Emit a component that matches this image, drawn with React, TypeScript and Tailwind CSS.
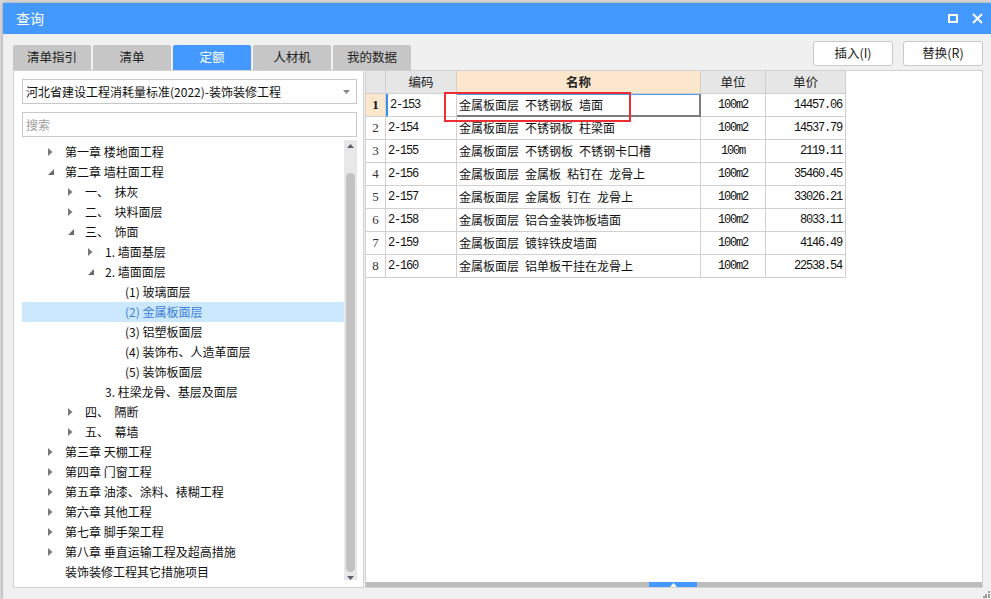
import React from "react";

type TreeNode = {
  label: string;
  level: number;
  arrow: "closed" | "open" | "none";
  selected?: boolean;
};

const tree: TreeNode[] = [
  { label: "第一章 楼地面工程", level: 0, arrow: "closed" },
  { label: "第二章 墙柱面工程", level: 0, arrow: "open" },
  { label: "一、  抹灰", level: 1, arrow: "closed" },
  { label: "二、  块料面层", level: 1, arrow: "closed" },
  { label: "三、  饰面", level: 1, arrow: "open" },
  { label: "1. 墙面基层", level: 2, arrow: "closed" },
  { label: "2. 墙面面层", level: 2, arrow: "open" },
  { label: "(1) 玻璃面层", level: 3, arrow: "none" },
  { label: "(2) 金属板面层", level: 3, arrow: "none", selected: true },
  { label: "(3) 铝塑板面层", level: 3, arrow: "none" },
  { label: "(4) 装饰布、人造革面层", level: 3, arrow: "none" },
  { label: "(5) 装饰板面层", level: 3, arrow: "none" },
  { label: "3. 柱梁龙骨、基层及面层", level: 2, arrow: "none" },
  { label: "四、  隔断", level: 1, arrow: "closed" },
  { label: "五、  幕墙", level: 1, arrow: "closed" },
  { label: "第三章 天棚工程", level: 0, arrow: "closed" },
  { label: "第四章 门窗工程", level: 0, arrow: "closed" },
  { label: "第五章 油漆、涂料、裱糊工程", level: 0, arrow: "closed" },
  { label: "第六章 其他工程", level: 0, arrow: "closed" },
  { label: "第七章 脚手架工程", level: 0, arrow: "closed" },
  { label: "第八章 垂直运输工程及超高措施", level: 0, arrow: "closed" },
  { label: "装饰装修工程其它措施项目", level: 0, arrow: "none" },
];

// indentation per level, written out in full so tailwind picks them up
const indent = ["pl-[26px]", "pl-[46px]", "pl-[66px]", "pl-[86px]"];

const rows = [
  { code: "2-153", name: "金属板面层\u2002不锈钢板\u2002墙面", unit: "100m2", price: "14457.06" },
  { code: "2-154", name: "金属板面层\u2002不锈钢板\u2002柱梁面", unit: "100m2", price: "14537.79" },
  { code: "2-155", name: "金属板面层\u2002不锈钢板\u2002不锈钢卡口槽", unit: "100m", price: "2119.11" },
  { code: "2-156", name: "金属板面层\u2002金属板\u2002粘钉在\u2002龙骨上", unit: "100m2", price: "35460.45" },
  { code: "2-157", name: "金属板面层\u2002金属板\u2002钉在\u2002龙骨上", unit: "100m2", price: "33026.21" },
  { code: "2-158", name: "金属板面层\u2002铝合金装饰板墙面", unit: "100m2", price: "8033.11" },
  { code: "2-159", name: "金属板面层\u2002镀锌铁皮墙面", unit: "100m2", price: "4146.49" },
  { code: "2-160", name: "金属板面层\u2002铝单板干挂在龙骨上", unit: "100m2", price: "22538.54" },
];

const tabs = ["清单指引", "清单", "定额", "人材机", "我的数据"];

const cjk = "font-['Microsoft_YaHei','Noto_Sans_CJK_SC',sans-serif]";
const mono = "font-['Liberation_Mono','Noto_Sans_CJK_SC',monospace]";

function Arrow({ kind }: { kind: TreeNode["arrow"] }) {
  if (kind === "closed") {
    return (
      <svg width="5" height="8" viewBox="0 0 5 8">
        <path d="M0 0 L4.5 4 L0 8 Z" fill="#7a7a7a" />
      </svg>
    );
  }
  if (kind === "open") {
    return (
      <svg width="6" height="6" viewBox="0 0 6 6">
        <path d="M6 0 L6 6 L0 6 Z" fill="#6a6a6a" />
      </svg>
    );
  }
  return null;
}

export default function App() {
  return (
    <div className={`w-[991px] h-[599px] overflow-hidden bg-[#d9d9d9] pt-[3px] pl-[3px] ${cjk}`}>
      <div className="w-[988px] h-[596px] flex flex-col bg-[#f0f0f0] shadow-[0_0_3px_rgba(0,0,0,0.3)]">
        {/* title bar */}
        <div className="h-[31px] bg-[#4499ff] flex items-center pl-[13px] pr-[8px] text-white">
          <span className="text-[14px]">查询</span>
          <div className="ml-auto flex items-center gap-[14px]">
            <div className="w-[10px] h-[9px] border-2 border-white" />
            <svg width="11" height="11" viewBox="0 0 11 11">
              <path d="M1 1 L10 10 M10 1 L1 10" stroke="white" strokeWidth="2" />
            </svg>
          </div>
        </div>

        {/* tabs + buttons */}
        <div className="h-[36px] flex items-end pl-[10px] pr-[8px]">
          <div className="flex gap-[2px]">
            {tabs.map((t) => (
              <div
                key={t}
                className={`w-[78px] h-[25px] rounded-t-[2px] flex items-center justify-center text-[12.5px] ${
                  t === "定额" ? "bg-[#4399ff] text-white" : "bg-[#c6c6c6] text-[#222]"
                }`}
              >
                {t}
              </div>
            ))}
          </div>
          <div className="ml-auto flex gap-[10px] mb-[4px]">
            <button className="w-[80px] h-[25px] bg-white border border-[#c9c9c9] rounded-[3px] text-[12.5px] text-[#222]">
              插入(I)
            </button>
            <button className="w-[80px] h-[25px] bg-white border border-[#c9c9c9] rounded-[3px] text-[12.5px] text-[#222]">
              替换(R)
            </button>
          </div>
        </div>

        {/* panels */}
        <div className="flex pl-[10px] h-[518px]">
          {/* left panel */}
          <div className="w-[351px] h-full bg-white border border-[#d2d2d2] pl-[8px] pt-[8px]">
            <div className="w-[335px] h-[25px] border border-[#c8c8c8] flex items-center pl-[3px] pr-[6px] text-[12px] text-[#111]">
              <span>河北省建设工程消耗量标准(2022)-装饰装修工程</span>
              <svg className="ml-auto" width="7" height="4" viewBox="0 0 7 4">
                <path d="M0 0 L7 0 L3.5 4 Z" fill="#888" />
              </svg>
            </div>
            <div className="w-[335px] h-[25px] mt-[8px] border border-[#c8c8c8] flex items-center pl-[3px] text-[12px] text-[#a0a0a0]">
              搜索
            </div>
            <div className="flex mt-[3px]">
              <div className="w-[322px] pt-[2px]">
                {tree.map((n) => (
                  <div
                    key={n.label}
                    className={`h-[20px] flex items-center text-[12px] ${indent[n.level]} ${
                      n.selected ? "bg-[#cce8ff] text-[#3b7fd9]" : "text-[#111]"
                    }`}
                  >
                    <div className="w-[17px] flex items-center">
                      <Arrow kind={n.arrow} />
                    </div>
                    <span className="whitespace-pre">{n.label}</span>
                  </div>
                ))}
              </div>
              {/* tree scrollbar */}
              <div className="w-[13px] h-[440px] bg-[#e8e8e8] flex flex-col items-center">
                <svg className="mt-[4px]" width="7" height="4" viewBox="0 0 7 4">
                  <path d="M0 4 L3.5 0 L7 4 Z" fill="#5f5f6a" />
                </svg>
                <div className="w-[9px] h-[402px] mt-[25px] bg-[#c2c2c2] rounded-t-full rounded-b-full" />
                <svg className="mt-[4px]" width="7" height="4" viewBox="0 0 7 4">
                  <path d="M0 0 L7 0 L3.5 4 Z" fill="#5f5f6a" />
                </svg>
              </div>
            </div>
          </div>

          {/* right panel */}
          <div className="ml-[1px] w-[618px] h-full bg-white border border-[#d2d2d2] flex flex-col relative">
            <div className="flex-1">
              <div className="flex h-[23px] text-[12.5px] text-[#222]">
                <div className="w-[20px] bg-[#e6e6e6] border-r border-b border-[#d0d0d0]" />
                <div className="w-[71px] bg-[#e6e6e6] border-r border-b border-[#d0d0d0] flex items-center justify-center">
                  编码
                </div>
                <div className="w-[244px] bg-[#fde7cc] border-r border-b border-[#d0d0d0] flex items-center justify-center font-bold">
                  名称
                </div>
                <div className="w-[65px] bg-[#e6e6e6] border-r border-b border-[#d0d0d0] flex items-center justify-center">
                  单位
                </div>
                <div className="w-[80px] bg-[#e6e6e6] border-r border-b border-[#d0d0d0] flex items-center justify-center">
                  单价
                </div>
              </div>
              {rows.map((r, i) => {
                const first = i === 0;
                return (
                  <div key={r.code} className="flex h-[23px] text-[12px] text-[#111]">
                    <div
                      className={`w-[20px] border-r border-b border-[#d0d0d0] flex items-center justify-center font-['Liberation_Serif',serif] text-[13px] ${
                        first ? "bg-[#fde7cc] font-bold text-[#111]" : "text-[#333]"
                      }`}
                    >
                      {i + 1}
                    </div>
                    <div
                      className={`w-[71px] border-r border-b border-[#d0d0d0] flex items-center pl-[2px] ${mono} tracking-[-1.2px] ${
                        first ? "border-l-2 border-l-[#3a8ef0] pl-0" : ""
                      }`}
                    >
                      {r.code}
                    </div>
                    <div
                      className={`w-[244px] flex items-center pl-[2px] whitespace-pre ${
                        first
                          ? "border-t border-t-[#4a9cf5] border-r-2 border-r-[#7d7d7d] border-b-2 border-b-[#7d7d7d]"
                          : "border-r border-b border-[#d0d0d0]"
                      }`}
                    >
                      {r.name}
                    </div>
                    <div className={`w-[65px] border-r border-b border-[#d0d0d0] flex items-center justify-center ${mono} tracking-[-1.2px]`}>
                      {r.unit}
                    </div>
                    <div className={`w-[80px] border-r border-b border-[#d0d0d0] flex items-center justify-end pr-[3px] ${mono} tracking-[-1.2px]`}>
                      {r.price}
                    </div>
                  </div>
                );
              })}
            </div>
            {/* bottom splitter bar */}
            <div className="h-[5px] bg-[#bdbdbd] flex">
              <div className="ml-[283px] w-[48px] h-full bg-[#4399ff] flex items-center justify-center">
                <svg width="7" height="4" viewBox="0 0 7 4">
                  <path d="M0 4 L3.5 0 L7 4 Z" fill="white" />
                </svg>
              </div>
            </div>
            {/* highlighted cell marker */}
            <div className="absolute left-[78px] top-[21px] w-[187px] h-[30px] border-2 border-[#ec2d33]" />
          </div>
        </div>

        {/* footer with resize grip */}
        <div className="flex-1 flex items-end justify-end pr-[1px] pb-[1px]">
          <svg width="7" height="7" viewBox="0 0 7 7">
            <rect x="5" y="0" width="2" height="2" fill="#a0a0a0" />
            <rect x="2" y="3" width="2" height="2" fill="#a0a0a0" />
            <rect x="5" y="3" width="2" height="2" fill="#a0a0a0" />
            <rect x="0" y="5" width="2" height="2" fill="#a0a0a0" />
            <rect x="2" y="5" width="2" height="2" fill="#a0a0a0" />
            <rect x="5" y="5" width="2" height="2" fill="#a0a0a0" />
          </svg>
        </div>
      </div>
    </div>
  );
}
